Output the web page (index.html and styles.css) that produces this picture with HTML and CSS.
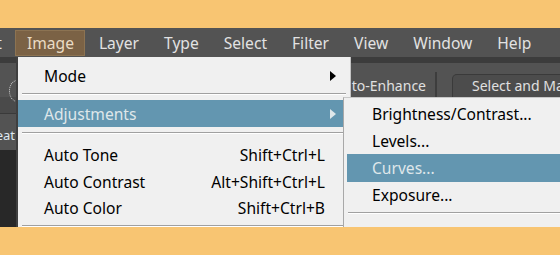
FILE: index.html
```html
<!DOCTYPE html>
<html lang="en">
<head>
    <meta charset="UTF-8">
    <meta name="viewport" content="width=device-width, initial-scale=1.0">
    <title>Image menu - Adjustments</title>
    <link rel="stylesheet" href="styles.css">
</head>
<body>
    <div class="frame">
        <div class="menubar">
            <span class="menubar-item">Edit</span>
            <span class="menubar-item active">Image</span>
            <span class="menubar-item">Layer</span>
            <span class="menubar-item">Type</span>
            <span class="menubar-item">Select</span>
            <span class="menubar-item">Filter</span>
            <span class="menubar-item">View</span>
            <span class="menubar-item">Window</span>
            <span class="menubar-item">Help</span>
        </div>
        <div class="strip"></div>
        <div class="options">
            <div class="options-left"><span class="lasso"></span></div>
            <div class="options-right">
                <span class="opt-text">Auto-Enhance</span>
                <span class="opt-sep"></span>
                <span class="opt-button">Select and Mask...</span>
            </div>
        </div>
        <div class="tabs-top"></div>
        <div class="tabs"><span class="tab">Creat</span></div>
        <div class="workspace"></div>

        <!-- Image menu -->
        <div class="dropdown main-menu">
            <div class="item item-mode"><span>Mode</span><span class="arrow"></span></div>
            <div class="sep"></div>
            <div class="item hover"><span>Adjustments</span><span class="arrow"></span></div>
            <div class="sep sep-wide"></div>
            <div class="item"><span>Auto Tone</span><span class="key">Shift+Ctrl+L</span></div>
            <div class="item"><span>Auto Contrast</span><span class="key">Alt+Shift+Ctrl+L</span></div>
            <div class="item"><span>Auto Color</span><span class="key">Shift+Ctrl+B</span></div>
            <div class="sep"></div>
        </div>

        <!-- Adjustments submenu -->
        <div class="dropdown sub-menu">
            <div class="item">Brightness/Contrast...</div>
            <div class="item">Levels...</div>
            <div class="item hover">Curves...</div>
            <div class="item">Exposure...</div>
            <div class="sep"></div>
        </div>
    </div>
</body>
</html>
```

FILE: styles.css
```css
body {
    margin: 0;
    background: #f8c572;
    font-family: "Noto Sans", "Open Sans", sans-serif;
    overflow: hidden;
}
.frame {
    position: relative;
    margin-top: 28px;
    height: 199px;
    background: #282828;
    overflow: hidden;
}
.menubar {
    display: flex;
    height: 29px;
    align-items: center;
    background: #535353;
    margin-left: -38px;
}
.menubar-item {
    padding: 0 10px 0 11px;
    margin-right: 2px;
    height: 26px;
    line-height: 25px;
    font-size: 15.6px;
    color: #e2e2e2;
    box-sizing: border-box;
    border: 1px solid transparent;
    white-space: nowrap;
}
.menubar-item.active {
    background: #7b6245;
    border-color: #8c7352;
    color: #eadcc6;
}
.strip {
    height: 6px;
    background: #3c3c3c;
}
.options {
    display: flex;
    height: 34px;
    background: #535353;
}
.options-left {
    width: 16px;
    flex-shrink: 0;
    border-right: 1px solid #3a3a3a;
    position: relative;
}
.lasso {
    position: absolute;
    left: 9px;
    top: 17px;
    width: 14px;
    height: 20px;
    border: 1px dotted #d8d8d8;
    border-radius: 50%;
}
.options-right {
    flex: 1;
    display: flex;
    align-items: flex-end;
    color: #e0e0e0;
    font-size: 14px;
    white-space: nowrap;
}
.opt-text {
    flex-shrink: 0;
    width: 409px;
    text-align: right;
    line-height: 20px;
    padding-bottom: 1px;
}
.opt-sep {
    flex-shrink: 0;
    width: 2px;
    height: 25px;
    background: #3d3d3d;
    margin: 0 15px 0 9px;
}
.opt-button {
    flex-shrink: 0;
    height: 22px;
    line-height: 22px;
    padding: 0 16px 0 19px;
    background: #4c4c4c;
    border: 1px solid #3a3a3a;
    border-bottom: none;
    border-radius: 5px 5px 0 0;
}
.tabs-top {
    height: 16px;
    background: #4a4a4a;
    border-bottom: 1px solid #3a3a3a;
}
.tabs {
    height: 36px;
    background: #535353;
    overflow: hidden;
}
.tab {
    display: block;
    width: 15px;
    direction: rtl;
    overflow: hidden;
    white-space: nowrap;
    color: #dfe8f0;
    font-size: 13px;
    line-height: 42px;
}
.workspace {
    height: 80px;
    background: #282828;
}

.dropdown {
    position: absolute;
    background: #f0f0f0;
    color: #000;
    font-size: 15.6px;
    box-sizing: border-box;
}
.main-menu {
    left: 16px;
    top: 29px;
    width: 335px;
    height: 170px;
    border-left: 2px solid #3f3f3f;
    border-right: 1px solid #c4c4c4;
    padding-top: 5px;
}
.sub-menu {
    left: 343px;
    top: 69px;
    width: 230px;
    height: 130px;
    border-left: 1px solid #a8a8a8;
    border-top: 1px solid #c8c8c8;
    padding-top: 3px;
}
.item {
    display: flex;
    justify-content: space-between;
    align-items: center;
    height: 26.5px;
    padding: 0 25px 0 26px;
    white-space: nowrap;
}
.main-menu .item-mode {
    height: 28px;
}
.main-menu .hover {
    height: 27px;
}
.sub-menu .item {
    padding-left: 28px;
}
.item.hover {
    background: #6396b0;
    color: #dfe7ea;
}
.sub-menu .item.hover {
    height: 28px;
    margin-left: 3px;
    padding-left: 25px;
}
.sep {
    height: 1px;
    margin: 3px 4px 5px 4px;
    background: #a0a0a0;
    border-bottom: 1px solid #ffffff;
}
.sep-wide {
    margin: 5px 4px 8px 4px;
}
.arrow {
    width: 0;
    height: 0;
    border-top: 5px solid transparent;
    border-bottom: 5px solid transparent;
    border-left: 6px solid #000;
    margin-right: -11px;
}
.hover .arrow {
    border-left-color: #dfe7ea;
}
```
